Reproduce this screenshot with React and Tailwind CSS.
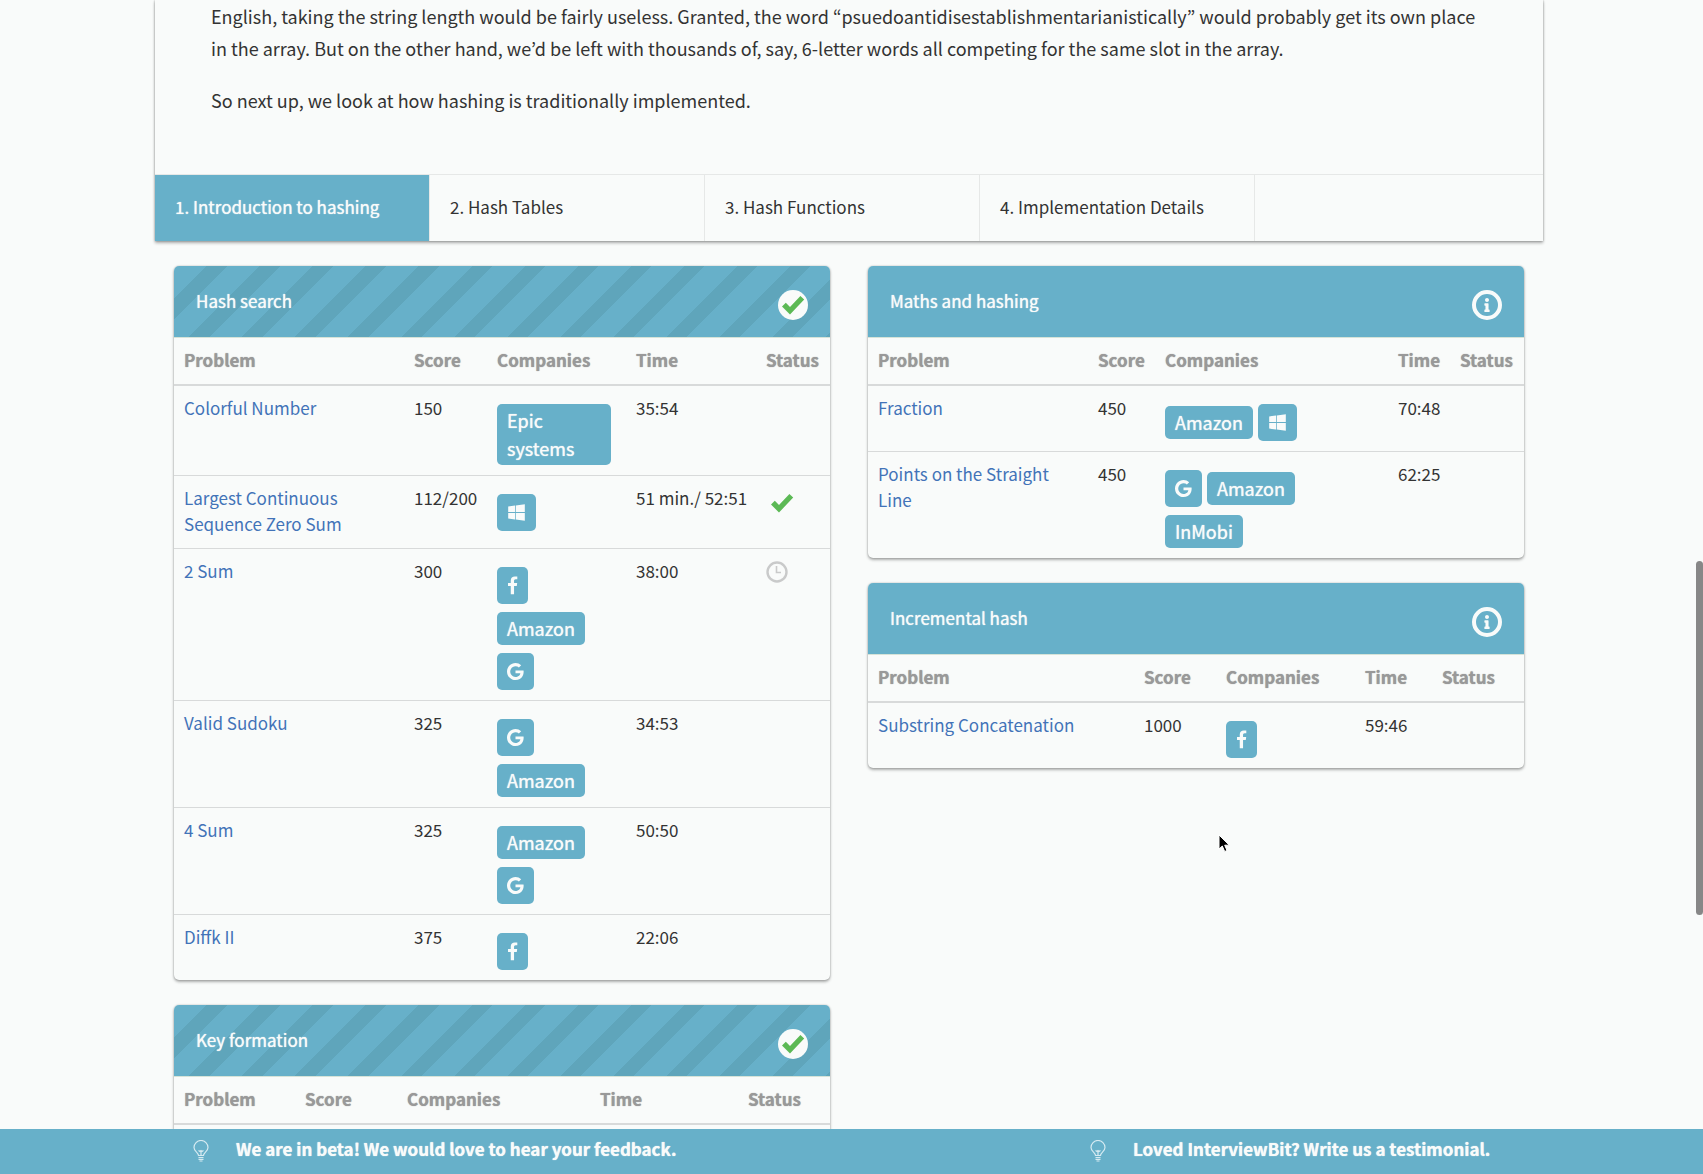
import { FaWindows, FaInfo } from "react-icons/fa";

const companyIcons = {
  Windows: <FaWindows size={19} aria-label="Microsoft" />,
  Facebook: (
    <svg width="11" height="20" viewBox="0 0 1024 1792" fill="currentColor" aria-label="Facebook">
      <path d="M959 12v264H802q-86 0-116 36t-30 108v189h293l-39 296H656v759H350V905H95V609h255V391q0-186 104-288.500T731 0q147 0 228 12z" />
    </svg>
  ),
  Google: (
    <svg width="17" height="18" viewBox="0 0 1536 1536" fill="currentColor" aria-label="Google">
      <path d="M768 622h725q12 67 12 128 0 217-91 387.500t-259.500 266.500T768 1500q-157 0-299-60.500t-245-163.500T60.500 1031 0 732t60.500-299T224 188 469 24.500 768-36q300 0 515 201l-209 201Q951 247 768 247q-129 0-238.500 65T356 489.500 292 732t64 242.500 173.500 177.500T768 1217q87 0 160-24t120-60 82-82 51.500-87 22.500-78H768V622z" />
    </svg>
  ),
};

const leftCards = [
  {
    title: "Hash search",
    done: true,
    widths: [230, 83, 139, 130, 74],
    rows: [
      ["Colorful Number", "150", ["Epic systems"], "35:54"],
      ["Largest Continuous Sequence Zero Sum", "112/200", ["Windows"], "51 min./ 52:51", "solved"],
      ["2 Sum", "300", ["Facebook", "Amazon", "Google"], "38:00", "pending"],
      ["Valid Sudoku", "325", ["Google", "Amazon"], "34:53"],
      ["4 Sum", "325", ["Amazon", "Google"], "50:50"],
      ["Diffk II", "375", ["Facebook"], "22:06"],
    ],
  },
  { title: "Key formation", done: true, widths: [121, 102, 193, 148, 92], rows: [] },
];

const rightCards = [
  {
    title: "Maths and hashing",
    widths: [220, 67, 233, 62, 74],
    rows: [
      ["Fraction", "450", ["Amazon", "Windows"], "70:48"],
      ["Points on the Straight Line", "450", ["Google", "Amazon", "InMobi"], "62:25"],
    ],
  },
  {
    title: "Incremental hash",
    widths: [266, 82, 139, 77, 92],
    rows: [["Substring Concatenation", "1000", ["Facebook"], "59:46"]],
  },
];

const tabs = ["1. Introduction to hashing", "2. Hash Tables", "3. Hash Functions", "4. Implementation Details"];
const columns = ["Problem", "Score", "Companies", "Time", "Status"];

function Check({ className }) {
  return (
    <svg className={className} viewBox="0 0 24 20" fill="#5cb955" aria-hidden="true">
      <path d="M1 11.500 4.800 7.800 9 12 19.400 1 23.200 4.600 9 19.500Z" />
    </svg>
  );
}

function Status({ kind }) {
  if (kind === "solved") return <Check className="mt-2 ml-1 h-5 w-6" />;
  if (kind === "pending")
    return (
      <svg className="mt-[3px] size-[22px]" viewBox="0 0 22 22" fill="none" stroke="#c9caca" aria-hidden="true">
        <circle cx="11" cy="11" r="9.500" strokeWidth="2.400" />
        <path d="M10.500 5v6.500H15" strokeWidth="1.600" />
      </svg>
    );
  return null;
}

function Badge({ name }) {
  const icon = companyIcons[name];
  return (
    <span
      className={
        icon
          ? "mr-[5px] flex h-[37px] items-center rounded-[5px] bg-[#67b0c9] px-[10px] text-[#f9fbfa]"
          : "mr-[5px] rounded-[5px] bg-[#67b0c9] px-[10px] pt-[2px] pb-[3px] text-lg leading-7 text-[#f9fbfa] [text-shadow:0_0_1px_currentColor]"
      }
    >
      {icon || name}
    </span>
  );
}

function Card({ title, done, widths, rows }) {
  return (
    <section className="overflow-hidden rounded-[5px] bg-[#f9fbfa] shadow-[0_2px_3px_rgba(0,0,0,0.3),0_0_2px_rgba(0,0,0,0.25)]">
      <header
        className={
          done
            ? "flex h-[71px] items-center justify-between bg-[#67b0c9] bg-[repeating-linear-gradient(135deg,transparent_0%,transparent_4.5%,#5fa5bb_4.5%,#5fa5bb_7.3%)] px-[22px] pb-[2px]"
            : "flex h-[71px] items-center justify-between bg-[#67b0c9] px-[22px] pb-[2px]"
        }
      >
        <h2 className="text-[17px] leading-6 text-[#f9fbfa] [text-shadow:0_0_1px_currentColor]">{title}</h2>
        {done ? (
          <span className="mt-2 flex size-[30px] items-center justify-center rounded-full bg-[#f9fbfa]">
            <Check className="h-5 w-6" />
          </span>
        ) : (
          <span className="mt-2 flex size-[30px] items-center justify-center rounded-full border-4 border-[#f9fbfa] text-[#f9fbfa]">
            <FaInfo size={14} />
          </span>
        )}
      </header>
      <table className="w-full table-fixed border-t border-[#d6e3d8] text-left text-[17px] leading-[26px] text-[#333]">
        <colgroup>
          {widths.map((w, i) => (
            <col key={i} style={{ width: w }} />
          ))}
        </colgroup>
        <thead>
          <tr className="border-b-2 border-[#d8dada] text-[#999]">
            {columns.map((c) => (
              <th key={c} className="px-[10px] pt-[9px] pb-[11px] font-bold [text-shadow:0_0_1px_currentColor]">
                {c}
              </th>
            ))}
          </tr>
        </thead>
        <tbody>
          {rows.map(([name, score, companies, time, status]) => (
            <tr key={name} className="border-t border-[#d8dada] align-top first:border-t-0">
              <td className="px-[10px] pt-[9px] pb-[11px]">
                <a href="#" className="text-[#4273b8]">
                  {name}
                </a>
              </td>
              <td className="px-[10px] pt-[9px]">{score}</td>
              <td className="px-[10px] pt-[18px] pb-[10px]">
                <div className="flex flex-wrap items-center gap-y-2">
                  {companies.map((c) => (
                    <Badge key={c} name={c} />
                  ))}
                </div>
              </td>
              <td className="px-[10px] pt-[9px] whitespace-nowrap">{time}</td>
              <td className="px-[10px] pt-[9px]">
                <Status kind={status} />
              </td>
            </tr>
          ))}
        </tbody>
      </table>
      {rows.length === 0 && <div className="h-16" />}
    </section>
  );
}

function Bulb() {
  return (
    <svg className="mt-1 h-[22px] w-4 shrink-0" viewBox="0 0 16 22" fill="none" stroke="#d5eaf1" strokeWidth="1.200" aria-hidden="true">
      <path d="M5.500 15.500C5.500 12.500 1 11.500 1 7.500a7 7 0 0 1 14 0c0 4-4.500 5-4.500 8Z" />
      <path d="M5.500 10.500 7 11.500l1-1 1 1 1.500-1M8 11v4" />
      <path d="M5.500 17.500h5M5.500 19.300h5M6.500 21h3" />
    </svg>
  );
}

export default function App() {
  return (
    <div className="relative flex h-screen flex-col overflow-hidden bg-[#f9fbfa] font-['Noto_Sans_CJK_KR','Noto_Sans',sans-serif] text-[#333]">
      <main className="min-h-0 flex-1 overflow-hidden pr-[5px]">
        <div className="mx-auto max-w-[1388px]">
          <article className="shadow-[0_2px_3px_rgba(0,0,0,0.3),0_0_2px_rgba(0,0,0,0.3)]">
            <div className="px-14 pb-[58px] text-lg leading-8">
              <p>
                English, taking the string length would be fairly useless. Granted, the word
                “psuedoantidisestablishmentarianistically” would probably get its own place in the array. But on the
                other hand, we’d be left with thousands of, say, 6-letter words all competing for the same slot in the
                array.
              </p>
              <p className="mt-5">So next up, we look at how hashing is traditionally implemented.</p>
            </div>
            <nav className="flex border-t border-[#e6e8e7] text-[17px]">
              {tabs.map((t, i) => (
                <a
                  key={t}
                  href="#"
                  className={
                    i === 0
                      ? "flex h-[66px] w-[275px] items-center border-r border-[#e6e8e7] bg-[#67b0c9] px-5 pb-[2px] text-[#f9fbfa] [text-shadow:0_0_1px_currentColor]"
                      : "flex h-[66px] w-[275px] items-center border-r border-[#e6e8e7] px-5 pb-[2px]"
                  }
                >
                  {t}
                </a>
              ))}
            </nav>
          </article>
          <div className="grid grid-cols-2 gap-[38px] px-[19px] pt-[25px]">
            <div className="flex flex-col gap-[25px]">
              {leftCards.map((c) => (
                <Card key={c.title} {...c} />
              ))}
            </div>
            <div className="flex flex-col gap-[25px]">
              {rightCards.map((c) => (
                <Card key={c.title} {...c} />
              ))}
            </div>
          </div>
        </div>
      </main>
      <footer className="grid h-[45px] shrink-0 grid-cols-[897px_1fr] items-center bg-[#67b0c9] pb-[6px] pl-[193px] text-[17px] font-bold text-[#f9fbfa] [text-shadow:0_0_1px_currentColor]">
        <a href="#" className="flex items-center gap-[27px]">
          <Bulb />
          We are in beta! We would love to hear your feedback.
        </a>
        <a href="#" className="flex items-center gap-[27px]">
          <Bulb />
          Loved InterviewBit? Write us a testimonial.
        </a>
      </footer>
      <div className="absolute top-[561px] right-0 h-[354px] w-[7px] rounded-full bg-[#878787]" />
      <svg className="absolute top-[834px] left-[1218px] h-[20px] w-[13px]" viewBox="0 0 13 20" aria-hidden="true">
        <path d="M1 1v14l3.300-3 2.400 5.500 2.300-1L6.700 11.200h4.600Z" fill="#000" stroke="#fff" />
      </svg>
    </div>
  );
}
